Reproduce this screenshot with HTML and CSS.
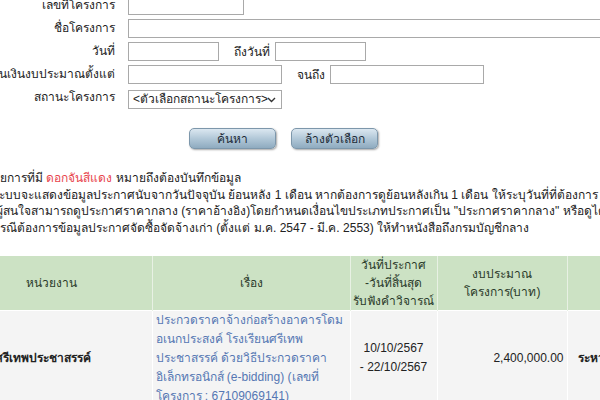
FILE: index.html
```html
<!DOCTYPE html>
<html lang="th">
<head>
    <meta charset="UTF-8">
    <title>ค้นหาประกาศจัดซื้อจัดจ้าง</title>
    <link rel="stylesheet" href="styles.css">
</head>
<body>
<div class="page">
    <!-- ฟอร์มค้นหา -->
    <div class="search-form">
        <label class="form-label">เลขที่โครงการ</label>
        <div class="form-field"><input type="text" class="in-mid"></div>

        <label class="form-label">ชื่อโครงการ</label>
        <div class="form-field"><input type="text" class="in-long"></div>

        <label class="form-label">วันที่</label>
        <div class="form-field">
            <input type="text" class="in-date">
            <span class="sub-label">ถึงวันที่</span>
            <input type="text" class="in-date">
        </div>

        <label class="form-label">จำนวนเงินงบประมาณตั้งแต่</label>
        <div class="form-field">
            <input type="text" class="in-money">
            <span class="sub-label">จนถึง</span>
            <input type="text" class="in-money">
        </div>

        <label class="form-label">สถานะโครงการ</label>
        <div class="form-field">
            <div class="select-wrap">
                <select class="in-select">
                    <option>&lt;ตัวเลือกสถานะโครงการ&gt;</option>
                </select>
                <svg class="select-arrow" width="9" height="6" viewBox="0 0 9 6">
                    <path d="M1 1 L4.5 4.5 L8 1" fill="none" stroke="#333" stroke-width="1.4"/>
                </svg>
            </div>
        </div>
    </div>

    <div class="button-row">
        <button class="btn">ค้นหา</button>
        <button class="btn">ล้างตัวเลือก</button>
    </div>

    <div class="notes">
        <p class="first">รายการที่มี <span class="red">ดอกจันสีแดง</span> หมายถึงต้องบันทึกข้อมูล</p>
        <p>ระบบจะแสดงข้อมูลประกาศนับจากวันปัจจุบัน ย้อนหลัง 1 เดือน หากต้องการดูย้อนหลังเกิน 1 เดือน ให้ระบุวันที่ที่ต้องการ</p>
        <p class="third">ผู้สนใจสามารถดูประกาศราคากลาง (ราคาอ้างอิง)โดยกำหนดเงื่อนไขประเภทประกาศเป็น "ประกาศราคากลาง" หรือดูได้ที่ประกาศ</p>
        <p>กรณีต้องการข้อมูลประกาศจัดซื้อจัดจ้างเก่า (ตั้งแต่ ม.ค. 2547 - มี.ค. 2553) ให้ทำหนังสือถึงกรมบัญชีกลาง</p>
    </div>

    <!-- ตารางผลการค้นหา -->
    <table class="result-table">
        <thead>
            <tr>
                <th class="col-dept">หน่วยงาน</th>
                <th class="col-title">เรื่อง</th>
                <th class="col-date">วันที่ประกาศ<br>-วันที่สิ้นสุด<br>รับฟังคำวิจารณ์</th>
                <th class="col-money">งบประมาณ<br>โครงการ(บาท)</th>
                <th class="col-status">สถานะโครงการ</th>
            </tr>
        </thead>
        <tbody>
            <tr>
                <td class="dept">โรงเรียนศรีเทพประชาสรรค์</td>
                <td class="title"><a href="#" class="title-link">ประกวดราคาจ้างก่อสร้างอาคารโดมอเนกประสงค์ โรงเรียนศรีเทพประชาสรรค์ ด้วยวิธีประกวดราคาอิเล็กทรอนิกส์ (e-bidding) (เลขที่โครงการ : 67109069141)</a></td>
                <td class="center">10/10/2567<br>- 22/10/2567</td>
                <td class="money">2,400,000.00</td>
                <td class="status">ระหว่างดำเนินการ</td>
            </tr>
        </tbody>
    </table>
</div>
</body>
</html>
```

FILE: styles.css
```css
html, body {
    margin: 0;
    padding: 0;
    overflow: hidden;
    background-color: #fff;
}
body {
    font-family: Tahoma, "Liberation Sans", sans-serif;
    font-size: 12px;
    color: #222;
}
.page {
    margin-left: -48px;
    margin-top: -4px;
    width: 900px;
}

/* ฟอร์มค้นหา */
.search-form {
    display: grid;
    grid-template-columns: 163px 1fr;
    column-gap: 13px;
    row-gap: 4px;
    grid-auto-rows: 19px;
}
.form-label {
    display: flex;
    justify-content: flex-end;
    white-space: nowrap;
    line-height: 19px;
}
.form-field {
    display: flex;
    align-items: center;
    white-space: nowrap;
}
.form-field input,
.in-select {
    box-sizing: border-box;
    height: 19px;
    border: 1px solid #a9a9a9;
    padding: 0 3px;
    font-family: inherit;
    font-size: 12px;
    margin: 0;
}
.in-mid { width: 116px; }
.in-long { width: 560px; }
.in-date { width: 91px; }
.in-money { width: 154px; }
.select-wrap {
    position: relative;
    margin-top: 3px;
}
.in-select {
    display: block;
    width: 154px;
    -webkit-appearance: none;
    appearance: none;
    background: #fff;
    color: #222;
    padding: 0 4px;
}
.select-arrow {
    position: absolute;
    right: 6px;
    top: 7px;
}
.sub-label {
    margin: 0 5px 0 15px;
}

/* ปุ่ม */
.button-row {
    display: flex;
    gap: 15px;
    margin-top: 21px;
    padding-left: 237px;
}
.btn {
    width: 87px;
    height: 21px;
    border: 1px solid #7d97ab;
    border-radius: 5px;
    background: linear-gradient(#dbe7f0, #b2c8d8 50%, #8fabc0);
    box-shadow: 1px 1px 2px rgba(0, 0, 0, 0.35);
    font-family: inherit;
    font-size: 12px;
    color: #1d2b38;
    padding: 0;
    cursor: pointer;
}

/* หมายเหตุ */
.notes {
    margin-top: 21px;
    padding-left: 41px;
    white-space: nowrap;
}
.notes p {
    margin: 0;
    line-height: 16.7px;
}
.notes p.first {
    margin-left: -6px;
}
.notes p.third {
    margin-left: 3px;
}
.red {
    color: #e8444c;
}

/* ตาราง */
.result-table {
    margin-top: 19px;
    border-collapse: collapse;
    table-layout: fixed;
    width: 815px;
}
.result-table th,
.result-table td {
    box-sizing: border-box;
}
.result-table th {
    background-color: #cce2c4;
    font-weight: normal;
    color: #2a3a2a;
    height: 54px;
    line-height: 18px;
    border-right: 1px solid #e8f1e4;
    padding: 0 2px;
}
.result-table td {
    background-color: #f4f4f4;
    border-right: 1px solid #fff;
    border-top: 1px solid #fff;
    padding: 0 3px;
    line-height: 19px;
    vertical-align: middle;
}
.col-dept { width: 200px; }
.col-title { width: 198px; }
.col-date { width: 87px; }
.col-money { width: 130px; }
.col-status { width: 200px; }
.dept {
    font-weight: bold;
    white-space: nowrap;
}
.result-table td.dept {
    padding-left: 0;
}
.title-link {
    color: #5577b3;
    text-decoration: none;
}
.center {
    text-align: center;
}
.money {
    text-align: right;
}
.status {
    font-weight: bold;
    white-space: nowrap;
}
.result-table td.status {
    padding-left: 10px;
}
```
